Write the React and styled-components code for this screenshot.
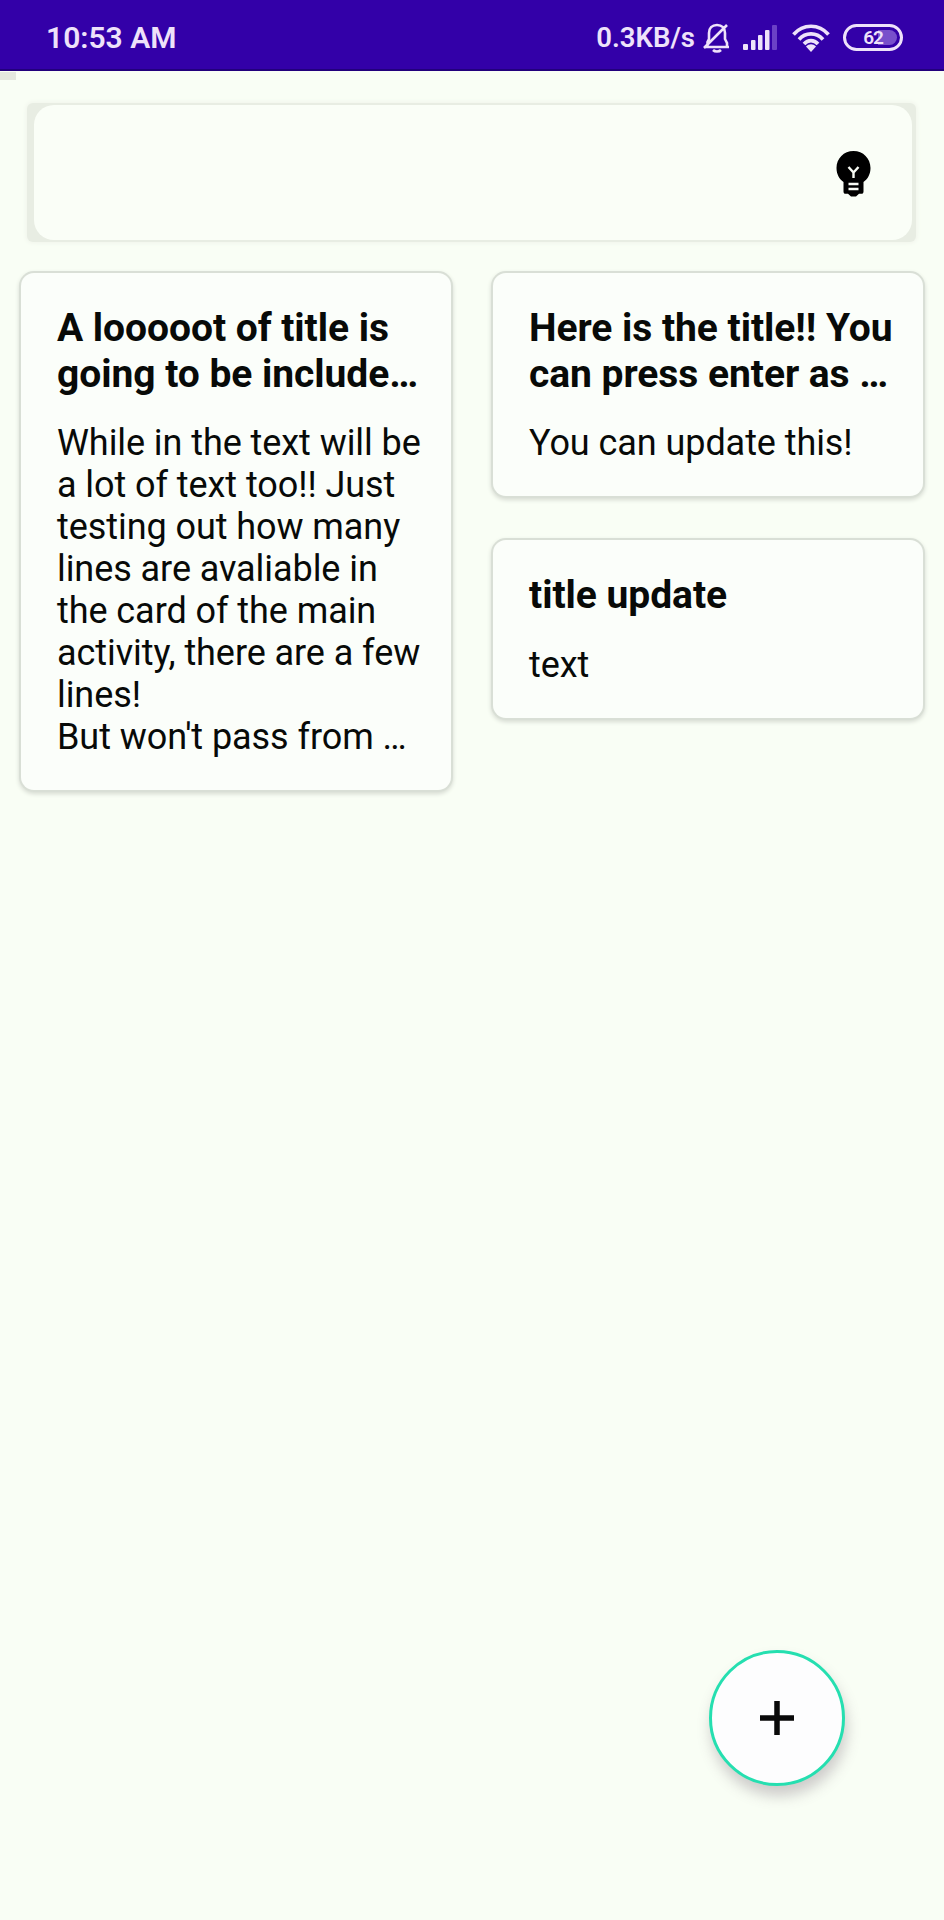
import React from "react";
import styled, { createGlobalStyle } from "styled-components";

const GlobalStyle = createGlobalStyle`
  *, *::before, *::after { box-sizing: border-box; }
  body { margin: 0; background: #f9fef5; }
`;

const Screen = styled.div`
  position: relative;
  display: flex;
  flex-direction: column;
  width: 944px;
  height: 1920px;
  background: #f9fef5;
  color: #080a08;
  font-family: Roboto, sans-serif;
`;

const StatusBar = styled.header`
  position: relative;
  display: flex;
  align-items: center;
  flex: none;
  height: 71px;
  padding: 6px 41px 0 46px;
  background: #3300a8;
  border-bottom: 2px solid #22007c;
  color: #eee2fa;
  font-size: 28px;
  font-weight: 500;

  &::after {
    content: "";
    position: absolute;
    left: 0;
    top: 72px;
    width: 16px;
    height: 8px;
    background: #e4e8df;
  }
`;

const Clock = styled.span`
  flex: 1;
  font-size: 30px;
  font-weight: 600;
`;

const Speed = styled.span`
  margin-right: 8px;
  font-size: 27.5px;
  font-weight: 600;
`;

const StatusIcon = styled.svg`
  display: block;
  flex: none;
  margin-left: ${(p) => p.$gap || 0}px;
`;

const Battery = styled.span`
  display: flex;
  align-items: center;
  justify-content: center;
  width: 60px;
  height: 27px;
  margin-left: 13px;
  padding: 3px;
  border: 3px solid #eee2fa;
  border-radius: 14px;
`;

const BatteryLevel = styled.span`
  display: flex;
  align-items: center;
  justify-content: center;
  width: 100%;
  height: 100%;
  border-radius: 9px;
  background: linear-gradient(90deg, transparent 60%, #7850cb 60%);
  font-size: 19px;
  font-weight: 600;
  letter-spacing: -1px;
`;

const SearchFrame = styled.section`
  flex: none;
  height: 139px;
  margin: 32px 28px 0 27px;
  padding: 2px 4px 2px 7px;
  border-radius: 6px;
  background: #e8ede3;
  box-shadow: 0 0 4px 1px #f0f4eb;
`;

const SearchBar = styled.div`
  display: flex;
  align-items: center;
  justify-content: flex-end;
  height: 100%;
  padding: 3px 41px 0 0;
  border-radius: 20px;
  background: #fafef7;
`;

const Notes = styled.main`
  display: grid;
  grid-template-columns: 430px 430px;
  gap: 42px;
  align-items: start;
  padding: 31px 21px 0;
`;

const Column = styled.div`
  display: flex;
  flex-direction: column;
  gap: 44px;
`;

const Card = styled.article`
  height: ${(p) => p.$height}px;
  padding: 33px 0 0 36px;
  border-radius: 13px;
  background: #fbfefa;
  box-shadow: 0 0 0 2px #d9dfd6, 0 2px 4px 2px #d6dbd2;
`;

const Title = styled.h2`
  margin: 0 0 25px;
  font-size: 39px;
  font-weight: 700;
  letter-spacing: -0.05px;
  line-height: 45.7px;
  white-space: pre;
`;

const Body = styled.p`
  margin: 0;
  font-size: 36px;
  letter-spacing: -0.07px;
  line-height: 42px;
  white-space: pre;
`;

const AddButton = styled.button`
  position: absolute;
  left: 709px;
  top: 1650px;
  display: flex;
  align-items: center;
  justify-content: center;
  width: 136px;
  height: 136px;
  padding: 0;
  border: 3px solid #25dfb0;
  border-radius: 50%;
  background: #fdfdfe;
  box-shadow: 2px 10px 14px rgba(90, 70, 90, 0.27);
`;

const BellOff = () => (
  <StatusIcon width="28" height="30" viewBox="0 0 28 30" fill="none" stroke="#eee2fa" strokeWidth="2.6">
    <path d="M2 24h24M4.500 23V19l1.500-3V10C6 5 9 2 14 2s8 3 8 8v6l2 4v4M1 25 24 2" />
    <path d="M10 27c2 2 6 2 8 0" />
  </StatusIcon>
);

const Signal = () => (
  <StatusIcon $gap={12} width="36" height="27" viewBox="0 0 36 27" fill="#eee2fa">
    <rect x="0" y="20" width="5" height="6" rx="1" />
    <rect x="8" y="16" width="4.500" height="10" rx="1" />
    <rect x="15" y="11" width="4.500" height="15" rx="1" />
    <rect x="22" y="6" width="4.500" height="20" rx="1" />
    <rect x="29" y="1" width="5" height="25" rx="1" fill="#6b41c6" />
  </StatusIcon>
);

const Wifi = () => (
  <StatusIcon $gap={13} width="38" height="28" viewBox="0 0 38 28" fill="none" stroke="#eee2fa" strokeWidth="3.6">
    <path d="M1.500 10.500C11-.500 27-.500 36.500 10.500" />
    <path d="M7 15.500C13.500 8 24.500 8 31 15.500" />
    <path d="M12 20c4-4.500 10-4.500 14 0" />
    <path d="M14 22.500c3-3 7-3 10 0l-5 5.500z" fill="#eee2fa" stroke="none" />
  </StatusIcon>
);

const Bulb = () => (
  <svg width="35" height="46" viewBox="0 0 35 46">
    <path
      d="M17.500 0C7.800 0 .5 7.500.5 17c0 6.200 2.800 11 7 14v9.500c0 1.500.8 2.300 2 2.300h2.500L15 45.500h5l3-2.700h2.500c1.200 0 2-.8 2-2.300V31c4.200-3 7-7.800 7-14C34.500 7.500 27.200 0 17.500 0Z"
      fill="#000"
    />
    <path d="M12.500 16l5 5.500 5-5.500M17.500 20.500V27" fill="none" stroke="#f8fbf4" strokeWidth="2.400" />
    <path d="M12.500 33h10M12.500 38h10" stroke="#f8fbf4" strokeWidth="2.600" />
  </svg>
);

const Plus = () => (
  <svg width="34" height="34" viewBox="0 0 34 34" stroke="#090909" strokeWidth="5.500">
    <path d="M0 17h34M17 0v34" />
  </svg>
);

const notes = [
  [
    {
      title: "A looooot of title is\ngoing to be include…",
      body:
        "While in the text will be\na lot of text too!! Just\ntesting out how many\nlines are avaliable in\nthe card of the main\nactivity, there are a few\nlines!\nBut won't pass from …",
      height: 517,
    },
  ],
  [
    { title: "Here is the title!! You\ncan press enter as …", body: "You can update this!", height: 223 },
    { title: "title update", body: "text", height: 178 },
  ],
];

export default function App() {
  return (
    <>
      <GlobalStyle />
      <Screen>
        <StatusBar>
          <Clock>10:53 AM</Clock>
          <Speed>0.3KB/s</Speed>
          <BellOff />
          <Signal />
          <Wifi />
          <Battery>
            <BatteryLevel>62</BatteryLevel>
          </Battery>
        </StatusBar>
        <SearchFrame>
          <SearchBar>
            <Bulb />
          </SearchBar>
        </SearchFrame>
        <Notes>
          {notes.map((column, i) => (
            <Column key={i}>
              {column.map((note) => (
                <Card key={note.title} $height={note.height}>
                  <Title>{note.title}</Title>
                  <Body>{note.body}</Body>
                </Card>
              ))}
            </Column>
          ))}
        </Notes>
        <AddButton aria-label="Add note">
          <Plus />
        </AddButton>
      </Screen>
    </>
  );
}
